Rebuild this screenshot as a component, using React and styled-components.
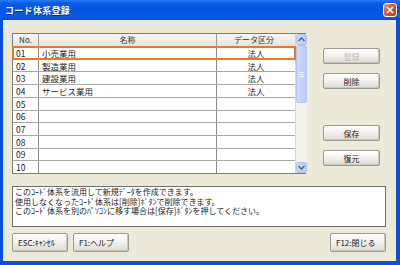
import React from "react";
import styled, { createGlobalStyle } from "styled-components";

const GlobalStyle = createGlobalStyle`
  html, body {
    margin: 0;
    padding: 0;
    background: #ffffff;
  }
  body {
    font-family: "Noto Sans CJK JP", "DejaVu Sans", sans-serif;
  }
`;

const Window = styled.div`
  width: 400px;
  height: 265px;
  display: flex;
  flex-direction: column;
  background: #0a4fdc;
  box-sizing: border-box;
  overflow: hidden;
`;

const TitleBar = styled.div`
  height: 20px;
  flex: none;
  display: flex;
  align-items: center;
  justify-content: space-between;
  padding: 0 3px 0 5px;
  background: linear-gradient(
    to bottom,
    #2a7cf2 0%,
    #0a5ce6 15%,
    #0553e0 50%,
    #0a5ae8 85%,
    #0548d2 100%
  );
`;

const Title = styled.span`
  color: #ffffff;
  font-size: 9px;
  font-weight: bold;
  letter-spacing: 0.3px;
  text-shadow: 1px 1px 0 #0a2a8a;
`;

const CloseButton = styled.div`
  width: 14px;
  height: 14px;
  box-sizing: border-box;
  border: 1px solid #ffffff;
  border-radius: 3px;
  background: linear-gradient(135deg, #f08a6a 0%, #e0582e 45%, #c9381a 100%);
  display: flex;
  align-items: center;
  justify-content: center;
`;

const Client = styled.div`
  flex: 1;
  margin: 0 4px 4px 3px;
  background: #ece9d8;
  padding: 13px 10px 0 9px;
  display: flex;
  flex-direction: column;
`;

const TopRow = styled.div`
  display: flex;
  height: 141px;
  flex: none;
`;

const Grid = styled.div`
  width: 294px;
  box-sizing: border-box;
  border: 1px solid #7b7b7b;
  background: #ffffff;
  display: flex;
`;

const GridBody = styled.div`
  flex: 1;
  display: flex;
  flex-direction: column;
  min-height: 0;
`;

const HeaderRow = styled.div`
  display: flex;
  height: 13px;
  flex: none;
  background: linear-gradient(to bottom, #f7f6f1, #e7e5dc);
  border-bottom: 1px solid #8d8d8d;
  box-sizing: border-box;
`;

const HeaderCell = styled.div`
  width: ${(p) => p.w}px;
  flex: ${(p) => (p.grow ? 1 : "none")};
  box-sizing: border-box;
  border-right: ${(p) => (p.last ? "none" : "1px solid #9c9c9c")};
  font-size: 8px;
  color: #333;
  line-height: 12px;
  text-align: center;
  padding-right: ${(p) => (p.last ? "4px" : "0")};
`;

const Row = styled.div`
  display: flex;
  flex: 1 1 0;
  min-height: 0;
  position: relative;
  border-bottom: 1px solid #a7a7a7;
  box-sizing: border-box;
  &:last-child {
    border-bottom: none;
  }
  ${(p) =>
    p.selected &&
    `
    &::after {
      content: "";
      position: absolute;
      left: -1px;
      right: -1px;
      top: -1px;
      bottom: -1px;
      border: 2px solid #f2752d;
      pointer-events: none;
    }
  `}
`;

const Cell = styled.div`
  width: ${(p) => p.w}px;
  flex: ${(p) => (p.grow ? 1 : "none")};
  box-sizing: border-box;
  border-right: ${(p) => (p.last ? "none" : "1px solid #8a8a8a")};
  font-size: 8.5px;
  line-height: 10px;
  color: #222;
  display: flex;
  align-items: center;
  justify-content: ${(p) => (p.center ? "center" : "flex-start")};
  padding-left: ${(p) => (p.center ? "0" : "3px")};
  white-space: nowrap;
  overflow: hidden;
`;

const ScrollBar = styled.div`
  width: 11px;
  flex: none;
  display: flex;
  flex-direction: column;
  background: #f4f3ee;
  border-left: 1px solid #d8d6cc;
`;

const ScrollButton = styled.div`
  height: 11px;
  flex: none;
  background: linear-gradient(to right, #c9d8fb, #b6cbf7);
  border: 1px solid #b0c4f0;
  border-radius: 2px;
  box-sizing: border-box;
  display: flex;
  align-items: center;
  justify-content: center;
`;

const Thumb = styled.div`
  height: 58px;
  flex: none;
  background: linear-gradient(to right, #cddcfc, #b9cdf8);
  border: 1px solid #b3c6f1;
  border-radius: 2px;
  box-sizing: border-box;
  display: flex;
  align-items: center;
  justify-content: center;
`;

const Track = styled.div`
  flex: 1;
`;

const SideButtons = styled.div`
  margin-left: 17px;
  padding-top: 15px;
  display: flex;
  flex-direction: column;
`;

const Button = styled.div`
  width: ${(p) => p.w || 57}px;
  height: ${(p) => p.h || 16}px;
  margin-top: ${(p) => p.mt || 0}px;
  flex: none;
  box-sizing: border-box;
  border: 1px solid #9a9a96;
  border-radius: 2px;
  background: linear-gradient(to bottom, #ffffff 0%, #f3f2ee 45%, #dcdad2 100%);
  box-shadow: inset -1px -1px 0 #c8c6be;
  display: flex;
  align-items: center;
  justify-content: ${(p) => (p.left ? "flex-start" : "center")};
  padding-left: ${(p) => (p.left ? "5px" : "0")};
  font-size: 8px;
  color: ${(p) => (p.disabled ? "#c2c0b6" : "#222")};
  white-space: nowrap;
`;

const InfoBox = styled.div`
  margin-top: 12px;
  height: 41px;
  flex: none;
  box-sizing: border-box;
  border: 1px solid #6f6f6f;
  background: #ffffff;
  padding: 0 2px;
  font-size: 8px;
  line-height: 9.5px;
  color: #222;
  white-space: nowrap;
`;

const BottomBar = styled.div`
  margin-top: 6px;
  display: flex;
  gap: 5px;
`;

const Spacer = styled.div`
  flex: 1;
`;

const columns = [
  { key: "no", w: 26 },
  { key: "name", w: 178 },
  { key: "kind", w: 78 },
];

const rows = [
  { no: "01", name: "小売業用", kind: "法人" },
  { no: "02", name: "製造業用", kind: "法人" },
  { no: "03", name: "建設業用", kind: "法人" },
  { no: "04", name: "サービス業用", kind: "法人" },
  { no: "05", name: "", kind: "" },
  { no: "06", name: "", kind: "" },
  { no: "07", name: "", kind: "" },
  { no: "08", name: "", kind: "" },
  { no: "09", name: "", kind: "" },
  { no: "10", name: "", kind: "" },
];

const Arrow = ({ up }) => (
  <svg width="7" height="5" viewBox="0 0 7 5">
    <path
      d={up ? "M0.5 4 L3.5 1 L6.5 4" : "M0.5 1 L3.5 4 L6.5 1"}
      fill="none"
      stroke="#4d6185"
      strokeWidth="1.4"
    />
  </svg>
);

const Grip = () => (
  <svg width="7" height="7" viewBox="0 0 7 7">
    <path d="M1 1.5 H6 M1 3.5 H6 M1 5.5 H6" stroke="#eef3fe" strokeWidth="1" />
  </svg>
);

function App() {
  return (
    <>
      <GlobalStyle />
      <Window>
        <TitleBar>
          <Title>コード体系登録</Title>
          <CloseButton>
            <svg width="8" height="8" viewBox="0 0 8 8">
              <path d="M1 1 L7 7 M7 1 L1 7" stroke="#ffffff" strokeWidth="1.6" />
            </svg>
          </CloseButton>
        </TitleBar>
        <Client>
          <TopRow>
            <Grid>
              <GridBody>
                <HeaderRow>
                  <HeaderCell w={26}>No.</HeaderCell>
                  <HeaderCell w={178}>名称</HeaderCell>
                  <HeaderCell w={78} grow last>
                    データ区分
                  </HeaderCell>
                </HeaderRow>
                {rows.map((r, i) => (
                  <Row key={r.no} selected={i === 0}>
                    <Cell w={columns[0].w}>{r.no}</Cell>
                    <Cell w={columns[1].w}>{r.name}</Cell>
                    <Cell w={columns[2].w} grow last center>
                      {r.kind}
                    </Cell>
                  </Row>
                ))}
              </GridBody>
              <ScrollBar>
                <ScrollButton>
                  <Arrow up />
                </ScrollButton>
                <Thumb>
                  <Grip />
                </Thumb>
                <Track />
                <ScrollButton>
                  <Arrow />
                </ScrollButton>
              </ScrollBar>
            </Grid>
            <SideButtons>
              <Button disabled>登録</Button>
              <Button mt={9}>削除</Button>
              <Button mt={36}>保存</Button>
              <Button mt={9}>復元</Button>
            </SideButtons>
          </TopRow>
          <InfoBox>
            このｺｰﾄﾞ体系を流用して新規ﾃﾞｰﾀを作成できます。
            <br />
            使用しなくなったｺｰﾄﾞ体系は[削除]ﾎﾞﾀﾝで削除できます。
            <br />
            このｺｰﾄﾞ体系を別のﾊﾟｿｺﾝに移す場合は[保存]ﾎﾞﾀﾝを押してください。
          </InfoBox>
          <BottomBar>
            <Button w={56} h={19} left>
              ESC:ｷｬﾝｾﾙ
            </Button>
            <Button w={56} h={19} left>
              F1:ヘルプ
            </Button>
            <Spacer />
            <Button w={56} h={19} left>
              F12:閉じる
            </Button>
          </BottomBar>
        </Client>
      </Window>
    </>
  );
}

export default App;
